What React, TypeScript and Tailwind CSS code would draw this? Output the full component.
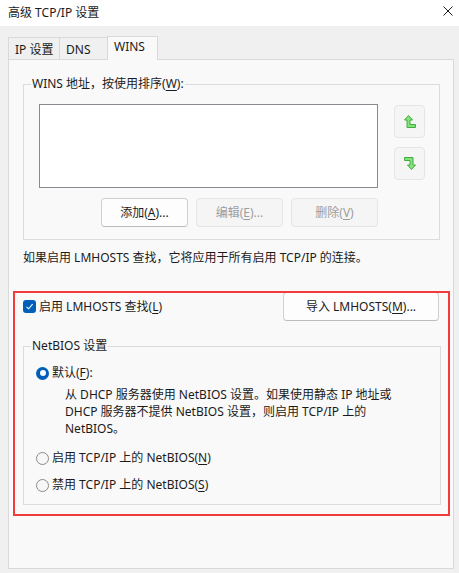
import React from "react";

const font = { fontFamily: '"Noto Sans", "Noto Sans CJK SC", sans-serif' };

const UpIcon = () => (
  <svg width="12" height="13" viewBox="0 0 12 13">
    <path
      d="M4.5 0.5 L8.5 5 L6 5 L6 9.5 L11.5 9.5 L11.5 12.5 L3 12.5 L3 5 L0.5 5 Z"
      fill="#86e07f"
      stroke="#3fae3c"
      strokeWidth="1"
      strokeLinejoin="miter"
    />
  </svg>
);

const DownIcon = () => (
  <svg width="12" height="13" viewBox="0 0 12 13">
    <path
      d="M0.5 0.5 L9 0.5 L9 8 L11.5 8 L7.5 12.5 L3.5 8 L6 8 L6 3.5 L0.5 3.5 Z"
      fill="#86e07f"
      stroke="#3fae3c"
      strokeWidth="1"
      strokeLinejoin="miter"
    />
  </svg>
);

const Radio = ({ checked }: { checked?: boolean }) =>
  checked ? (
    <span className="flex h-[13px] w-[13px] items-center justify-center rounded-full bg-[#005fb8]">
      <span className="h-[6px] w-[6px] rounded-full bg-white" />
    </span>
  ) : (
    <span className="h-[13px] w-[13px] rounded-full border border-[#8a8a8a] bg-[#f7f7f7]" />
  );

const Button = ({ children, disabled, className = "" }: { children: React.ReactNode; disabled?: boolean; className?: string }) => (
  <div
    className={
      "flex items-center justify-center rounded-[4px] border text-[12px] leading-[16px] " +
      (disabled
        ? "border-[#e5e5e5] bg-[#f5f5f5] text-[#9d9d9d] "
        : "border-[#d0d0d0] border-b-[#bcbcbc] bg-[#fdfdfd] text-[#1b1b1b] ") +
      className
    }
  >
    {children}
  </div>
);

export default function App() {
  return (
    <div className="relative h-[573px] w-[459px] overflow-hidden bg-[#f0f0f0] text-[12px] text-[#1b1b1b]" style={font}>
      {/* title bar */}
      <div className="flex h-[26px] items-center justify-between bg-white pl-[8px] pr-[6px]">
        <span className="leading-[16px]">高级 TCP/IP 设置</span>
        <svg width="10" height="10" viewBox="0 0 10 10" className="mb-[5px]">
          <path d="M0.5 0.5 L9.5 9.5 M9.5 0.5 L0.5 9.5" stroke="#1b1b1b" strokeWidth="1" />
        </svg>
      </div>

      <div className="px-[8px] pt-[10px]">
        {/* tabs */}
        <div className="flex items-end">
          <div className="flex h-[22px] w-[52px] items-center border-l border-r border-t border-[#d9d9d9] pl-[6px] pt-[2px] leading-[16px]">
            IP 设置
          </div>
          <div className="flex h-[22px] w-[48px] items-center border-r border-t border-[#d9d9d9] pl-[6px] pt-[2px] leading-[16px]">
            DNS
          </div>
          <div className="relative z-10 -mb-px -ml-px flex h-[24px] w-[51px] items-center border-l border-r border-t border-[#d9d9d9] bg-[#f9f9f9] pb-[3px] pl-[6px] leading-[16px]">
            WINS
          </div>
        </div>

        {/* panel */}
        <div className="h-[510px] w-[446px] border border-[#d9d9d9] bg-[#f9f9f9] pl-[14px] pr-[13px] pt-[16px]">
          <fieldset className="border border-[#dcdcdc] pb-[12px]">
            <legend className="ml-[7px] px-[1px] leading-[16px]">
              WINS 地址，按使用排序(<u className="underline-offset-2">W</u>):
            </legend>
            <div className="mt-[12px] flex pl-[15px]">
              <div className="h-[84px] w-[339px] border border-[#878a90] bg-white" />
              <div className="ml-[16px] mt-px flex flex-col gap-[9px]">
                <div className="flex h-[33px] w-[31px] items-center justify-center rounded-[4px] border border-[#e5e5e5] bg-[#f5f5f5]">
                  <UpIcon />
                </div>
                <div className="flex h-[33px] w-[31px] items-center justify-center rounded-[4px] border border-[#e5e5e5] bg-[#f5f5f5]">
                  <DownIcon />
                </div>
              </div>
            </div>
            <div className="mt-[10px] flex w-[354px] justify-end gap-[8px] pl-[15px]">
              <Button className="h-[29px] w-[87px]">
                添加(<u className="underline-offset-2">A</u>)...
              </Button>
              <Button disabled className="h-[29px] w-[87px]">
                编辑(<u className="underline-offset-2">E</u>)...
              </Button>
              <Button disabled className="h-[29px] w-[87px]">
                删除(<u className="underline-offset-2">V</u>)
              </Button>
            </div>
          </fieldset>

          <p className="mt-[10px] leading-[16px]">如果启用 LMHOSTS 查找，它将应用于所有启用 TCP/IP 的连接。</p>

          <div className="mt-[26px] flex h-[29px] items-center justify-between">
            <div className="flex items-center gap-[3px]">
              <span className="flex h-[13px] w-[13px] items-center justify-center rounded-[3px] bg-[#005fb8]">
                <svg width="9" height="9" viewBox="0 0 9 9">
                  <path d="M1.5 4.8 L3.6 6.8 L7.6 2.2" fill="none" stroke="white" strokeWidth="1.1" />
                </svg>
              </span>
              <span className="leading-[16px]">
                启用 LMHOSTS 查找(<u className="underline-offset-2">L</u>)
              </span>
            </div>
            <Button className="mr-px h-[29px] w-[156px]">
              导入 LMHOSTS(<u className="underline-offset-2">M</u>)...
            </Button>
          </div>

          <fieldset className="mt-[17px] w-[418px] border border-[#dcdcdc] pb-[11px]">
            <legend className="ml-[7px] px-[1px] leading-[16px]">NetBIOS 设置</legend>
            <div className="pl-[12px]">
              <div className="mt-[11px] flex items-center gap-[3px] leading-[16px]">
                <Radio checked />
                <span>
                  默认(<u className="underline-offset-2">F</u>):
                </span>
              </div>
              <p className="ml-[29px] mt-[5px] whitespace-nowrap leading-[17px]">
                从 DHCP 服务器使用 NetBIOS 设置。如果使用静态 IP 地址或
                <br />
                DHCP 服务器不提供 NetBIOS 设置，则启用 TCP/IP 上的
                <br />
                NetBIOS。
              </p>
              <div className="mt-[13px] flex items-center gap-[3px] leading-[16px]">
                <Radio />
                <span>
                  启用 TCP/IP 上的 NetBIOS(<u className="underline-offset-2">N</u>)
                </span>
              </div>
              <div className="mt-[11px] flex items-center gap-[3px] leading-[16px]">
                <Radio />
                <span>
                  禁用 TCP/IP 上的 NetBIOS(<u className="underline-offset-2">S</u>)
                </span>
              </div>
            </div>
          </fieldset>
        </div>
      </div>

      {/* red highlight annotation */}
      <div className="pointer-events-none absolute left-[13px] top-[291px] h-[225px] w-[437px] border-2 border-[#f23c3c]" />
    </div>
  );
}
